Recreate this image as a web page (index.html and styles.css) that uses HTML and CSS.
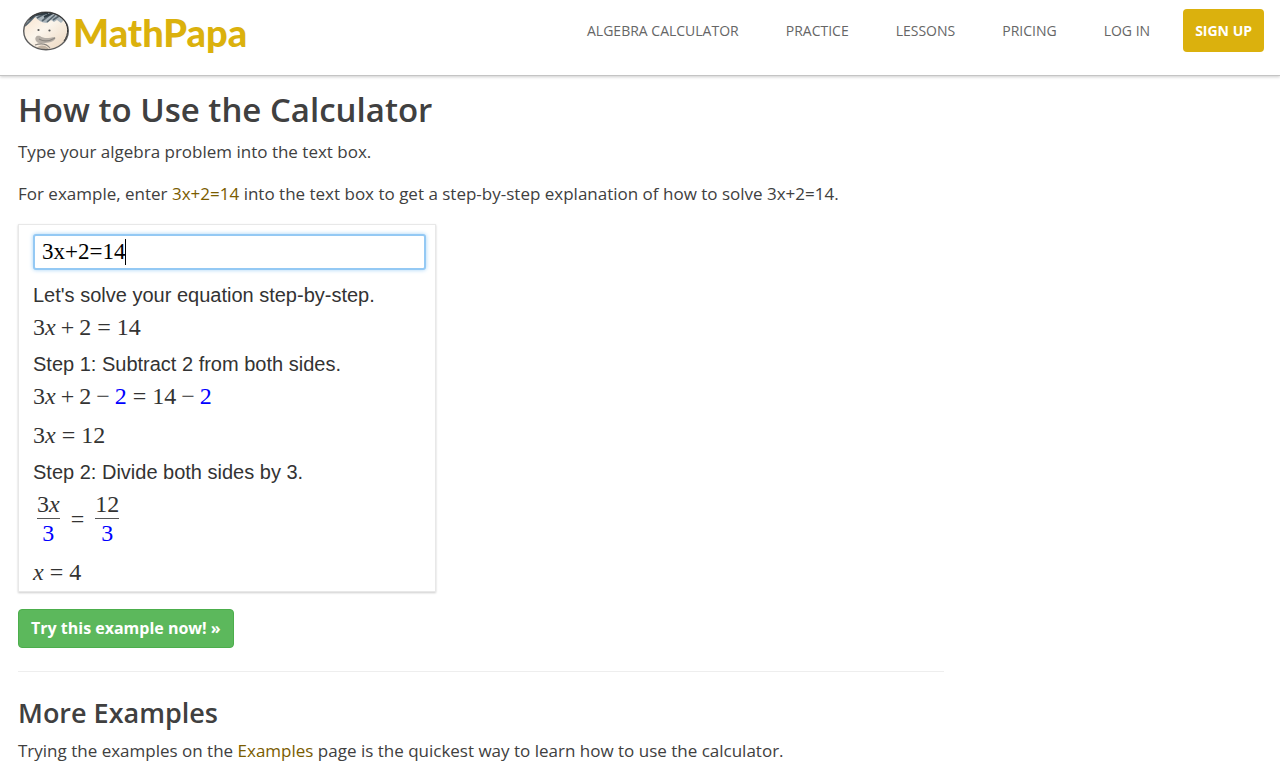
FILE: index.html
```html
<!DOCTYPE html>
<html lang="en">
<head>
    <meta charset="UTF-8">
    <meta name="viewport" content="width=device-width, initial-scale=1.0">
    <title>How to Use the Calculator - MathPapa</title>
    <link rel="stylesheet" href="styles.css">
</head>
<body>
    <header class="header">
        <a class="logo" href="#">
            <svg class="logo-face" viewBox="0 0 48 40" aria-hidden="true">
                <defs>
                    <clipPath id="face"><ellipse cx="24" cy="20" rx="22" ry="18.5"/></clipPath>
                    <linearGradient id="skin" x1="0" y1="0" x2="1" y2="1">
                        <stop offset="0" stop-color="#f8e0c8"/>
                        <stop offset=".45" stop-color="#fbf5ec"/>
                        <stop offset="1" stop-color="#ead2b8"/>
                    </linearGradient>
                </defs>
                <g clip-path="url(#face)">
                    <rect width="48" height="40" fill="url(#skin)"/>
                    <!-- hair -->
                    <path d="M2 16C7 13 10 10 13 6c3 3 7 6 12 6l4-3 3 2 3-2 4 3 2-2V0H2z" fill="#aab5bc"/>
                    <path d="M3 15 14 4M8 8 18 1M15 7l11-6M20 10l9-7M25 11l8-7M31 9l6-4" fill="none" stroke="#55636c" stroke-width="1.6"/>
                    <path d="M14 4l12-2M22 6l9-4M6 9l8-6" stroke="#2d3a43" stroke-width="2"/>
                    <!-- moustache and beard -->
                    <path d="M14 30c-2-4 1-6 4-5 4 3 9 2 15 1 2 3-5 6-10 6-4 0-7 1-9-2z" fill="#b5aea6"/>
                    <path d="M17 28c5 3 11 2 16-1M13 34c6-2 11-2 15 3" fill="none" stroke="#8b8680" stroke-width="1.1"/>
                    <path d="M14 38c2-4 8-5 12-1v3z" fill="#c1b3a3"/>
                </g>
                <circle cx="16.5" cy="19" r="1.1" fill="#555"/>
                <circle cx="27.5" cy="19.5" r="1.1" fill="#555"/>
                <ellipse cx="24" cy="20" rx="22.3" ry="18.8" fill="none" stroke="#5c5c5c" stroke-width="1.4"/>
                <path d="M8 7c8-7 24-8 33 1 6 6 6 15 1 22" fill="none" stroke="#2f3133" stroke-width="1"/>
            </svg>
            <span class="logo-text">MathPapa</span>
        </a>
        <nav class="nav">
            <a href="#">Algebra Calculator</a>
            <a href="#">Practice</a>
            <a href="#">Lessons</a>
            <a href="#">Pricing</a>
            <a href="#">Log In</a>
            <a class="signup" href="#">Sign Up</a>
        </nav>
    </header>

    <main class="content">
        <h1>How to Use the Calculator</h1>
        <p>Type your algebra problem into the text box.</p>
        <p>For example, enter <a href="#">3x+2=14</a> into the text box to get a step-by-step explanation of how to solve 3x+2=14.</p>

        <div class="example">
            <div class="problem">
                <input type="text" value="3x+2=14" aria-label="Algebra problem">
                <span class="caret"></span>
            </div>
            <div class="step">Let's solve your equation step-by-step.</div>
            <div class="math">3<i>x</i><span class="op">+</span>2<span class="rel">=</span>14</div>
            <div class="step">Step 1: Subtract 2 from both sides.</div>
            <div class="math">3<i>x</i><span class="op">+</span>2<span class="op">−</span><b>2</b><span class="rel">=</span>14<span class="op">−</span><b>2</b></div>
            <div class="math">3<i>x</i><span class="rel">=</span>12</div>
            <div class="step">Step 2: Divide both sides by 3.</div>
            <div class="math fractions">
                <span class="frac"><span>3<i>x</i></span><b>3</b></span>
                <span>=</span>
                <span class="frac"><span>12</span><b>3</b></span>
            </div>
            <div class="math"><i>x</i><span class="rel">=</span>4</div>
        </div>

        <button class="try-button" type="button">Try this example now! »</button>

        <hr>

        <h2>More Examples</h2>
        <p>Trying the examples on the <a href="#">Examples</a> page is the quickest way to learn how to use the calculator.</p>
    </main>
</body>
</html>
```
FILE: styles.css
```css
* {
    box-sizing: border-box;
}

body {
    margin: 0;
    background: white;
    color: #404040;
    font-family: "Segoe UI", "Open Sans", "Noto Sans", sans-serif;
    font-size: 17px;
    line-height: 24px;
}

a {
    color: #7a5c00;
    text-decoration: none;
}

/* Header */
.header {
    display: flex;
    justify-content: space-between;
    align-items: flex-start;
    padding: 9px 16px 20px 22px;
    border-bottom: 1px solid #c4c4c4;
    box-shadow: 0 1px 3px rgba(0,0,0,0.2);
}

.logo {
    display: flex;
    gap: 3px;
    color: #dbb10d;
}

.logo-face {
    width: 48px;
    height: 40px;
    margin-top: 2px;
}

.logo-text {
    font-family: Futura, Lato, sans-serif;
    font-size: 38px;
    font-weight: 900;
    line-height: 46px;
}

.nav {
    display: flex;
    align-items: center;
    gap: 47px;
    font-size: 14px;
    text-transform: uppercase;
}

.nav a {
    color: #666;
}

.nav .signup {
    margin-left: -14px;
    padding: 10px 12px 9px;
    border-radius: 4px;
    background: #dbb10d;
    color: white;
    font-weight: bold;
}

/* Page content */
.content {
    max-width: 962px;
    padding: 10px 18px 0;
}

h1, h2 {
    margin: 0;
    font-weight: 600;
}

h1 {
    font-size: 33px;
    line-height: 48px;
}

h2 {
    font-size: 27px;
    line-height: 36px;
}

p {
    margin: 6px 0 18px;
}

h2 + p {
    margin-top: 8px;
}

/* Worked example card */
.example {
    max-width: 418px;
    padding: 9px 9px 5px 14px;
    border: 1px solid #e8e8e8;
    box-shadow: 0 1px 2px rgba(0,0,0,0.2);
    color: #333;
}

.problem {
    position: relative;
}

.problem input {
    display: block;
    width: 100%;
    height: 36px;
    padding: 0 7px;
    border: 2px solid #94c9f4;
    border-radius: 3px;
    box-shadow: 0 0 4px #a5d3f7;
    color: black;
    font: 23px "Liberation Serif", serif;
}

.caret {
    position: absolute;
    top: 5px;
    left: 92px;
    width: 1px;
    height: 26px;
    background: black;
}

.step {
    margin-top: 9px;
    font: 20px/28px "Liberation Sans", Arial, sans-serif;
}

.problem + .step {
    margin-top: 11px;
}

.math {
    margin-top: 4px;
    font: 24px/28px "Liberation Serif", serif;
}

.math + .math {
    margin-top: 11px;
}

.math b {
    color: #0000ff;
    font-weight: normal;
}

.op {
    margin: 0 5px;
}

.rel {
    margin: 0 6px;
}

.fractions {
    display: flex;
    align-items: center;
    gap: 11px;
    padding-left: 4px;
}

.frac {
    display: flex;
    flex-direction: column;
    text-align: center;
}

.frac b {
    border-top: 1px solid #555;
}

.try-button {
    display: block;
    margin: 17px 0 23px;
    padding: 6px 12px;
    border: 1px solid #4cae4c;
    border-radius: 4px;
    background: #5cb85c;
    color: white;
    font: bold 16px/25px "Segoe UI", "Open Sans", "Noto Sans", sans-serif;
}

hr {
    margin: 0 0 23px;
    border: 0;
    border-top: 1px solid #eee;
}
```
